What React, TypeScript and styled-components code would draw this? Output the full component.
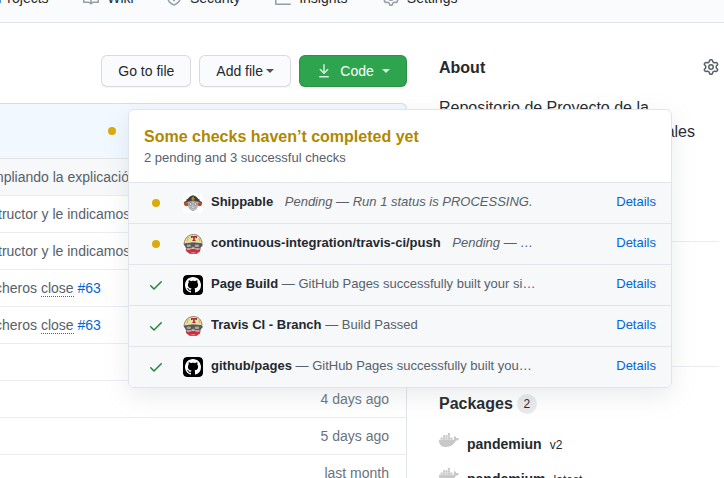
import React from "react";
import styled, { createGlobalStyle } from "styled-components";
import { FaDocker } from "react-icons/fa";

const GlobalStyle = createGlobalStyle`
  *, *::before, *::after { box-sizing: border-box; }
  body {
    margin: 0;
    background: #fff;
    color: #24292e;
    font-family: "Liberation Sans", Arial, sans-serif;
    font-size: 14px;
    line-height: 20px;
  }
  a { color: #0366d6; text-decoration: none; }
`;

const Page = styled.div`
  position: relative;
  height: 100vh;
  overflow: hidden;
`;

const Nav = styled.nav`
  display: flex;
  align-items: flex-end;
  gap: 30px;
  height: 23px;
  padding-bottom: 14px;
  margin-left: -26px;
  overflow: hidden;
  background: #fafbfc;
  border-bottom: 1px solid #e1e4e8;
`;

const NavLink = styled.a`
  display: flex;
  align-items: center;
  gap: 8px;
  color: #24292e;
`;

const NavLabel = styled.span`
  &::after {
    content: attr(data-label);
    display: block;
    height: 0;
    overflow: hidden;
    visibility: hidden;
    font-weight: 600;
  }
`;

const Icon = styled.svg<{ $color?: string }>`
  flex: none;
  display: block;
  width: 16px;
  height: 16px;
  fill: ${(p) => p.$color ?? "currentColor"};
`;

const Layout = styled.main`
  display: grid;
  grid-template-columns: minmax(0, 1fr) 280px;
  column-gap: 32px;
  padding: 32px 5px 0 0;
`;

const Toolbar = styled.div`
  display: flex;
  justify-content: flex-end;
  gap: 8px;
  margin-bottom: 16px;
`;

const Button = styled.button<{ $primary?: boolean; $gap?: number }>`
  display: flex;
  align-items: center;
  justify-content: center;
  gap: ${(p) => p.$gap ?? 8}px;
  min-width: ${(p) => (p.$primary ? "108px" : "auto")};
  height: 32px;
  padding: 0 16px;
  border: 1px solid rgba(27, 31, 35, 0.15);
  border-radius: 6px;
  background: ${(p) => (p.$primary ? "#2ea44f" : "#fafbfc")};
  color: ${(p) => (p.$primary ? "#fff" : "#24292e")};
  font: inherit;
  box-shadow: 0 1px 0 rgba(27, 31, 35, 0.04);
`;

const Caret = styled.span`
  border: 4px solid transparent;
  border-top-color: currentColor;
  border-bottom: 0;
  opacity: 0.8;
`;

const Files = styled.section`
  border: 1px solid #e1e4e8;
  border-left: 0;
  border-top: 0;
  border-top-right-radius: 6px;
`;

const LatestCommit = styled.div`
  display: flex;
  align-items: center;
  height: 56px;
  padding-left: 108px;
  margin-right: -1px;
  background: #f1f8ff;
  border: 1px solid #c8e1ff;
  border-left: 0;
  border-bottom-color: #e1e4e8;
  border-top-right-radius: 6px;
`;

const Dot = styled.span`
  width: 8px;
  height: 8px;
  border-radius: 50%;
  background: #dbab09;
`;

const FileTable = styled.table`
  width: 100%;
  table-layout: fixed;
  border-spacing: 0;
  color: #586069;
`;

const FileRow = styled.tr<{ $shaded?: boolean }>`
  background: ${(p) => (p.$shaded ? "#f6f8fa" : "#fff")};
`;

const Cell = styled.td`
  height: 37px;
  padding: 0;
  border-bottom: 1px solid #eaecef;
  white-space: nowrap;
`;

const AgeCell = styled(Cell)`
  width: 120px;
  padding-right: 17px;
  text-align: right;
  color: #6a737d;
`;

const Message = styled.div<{ $clip: number }>`
  margin-left: -${(p) => p.$clip}px;
`;

const Closes = styled.span`
  border-bottom: 1px dotted #586069;
`;

const SidebarSection = styled.section`
  padding-bottom: 24px;
  border-bottom: 1px solid #eaecef;
`;

const About = styled(SidebarSection)`
  height: 187px;
`;

const Releases = styled(SidebarSection)`
  height: 125px;
`;

const Packages = styled.section`
  padding-top: 24px;
`;

const HeadingRow = styled.div`
  display: flex;
  align-items: center;
  justify-content: space-between;
  height: 24px;
  margin-bottom: 17px;
`;

const Heading = styled.h2`
  display: flex;
  align-items: center;
  margin: 0;
  padding-top: 2px;
  font-size: 16px;
  line-height: 24px;
  gap: 4px;
`;

const IconButton = styled.button`
  padding: 0;
  border: 0;
  background: none;
  color: #586069;
`;

const Description = styled.p`
  margin: 0;
  font-size: 16px;
  line-height: 24px;
`;

const DescriptionEnd = styled.span`
  display: block;
  padding-right: 24px;
  text-align: right;
`;

const Counter = styled.span`
  min-width: 20px;
  padding: 0 6px;
  border-radius: 10px;
  background: rgba(209, 213, 218, 0.5);
  font-size: 12px;
  font-weight: 400;
  line-height: 20px;
  text-align: center;
`;

const PackageList = styled.ul`
  display: grid;
  gap: 10px;
  margin: 0;
  padding: 0;
  list-style: none;
`;

const PackageItem = styled.li`
  display: flex;
  align-items: baseline;
  gap: 8px;
  line-height: 24px;
`;

const DockerIcon = styled(FaDocker)`
  align-self: flex-start;
  width: 20px;
  height: 16px;
  color: #c8c8c8;
`;

const PackageLink = styled.a`
  color: #24292e;
  font-weight: 600;
`;

const Version = styled.span`
  font-size: 12px;
`;

const Popover = styled.div`
  position: absolute;
  top: 109px;
  left: 128px;
  width: 544px;
  overflow: hidden;
  background: #fff;
  border: 1px solid #e1e4e8;
  border-radius: 6px;
  box-shadow: 0 8px 24px rgba(149, 157, 165, 0.2);
  color: #586069;
  font-size: 13px;
`;

const PopoverHeader = styled.header`
  padding: 16px 15px 14px;
`;

const PopoverTitle = styled.h3`
  margin: 0;
  color: #b08800;
  font-size: 16px;
  line-height: 22px;
`;

const PopoverSubtitle = styled.p`
  margin: 0;
  line-height: 20px;
`;

const CheckList = styled.ul`
  margin: 0;
  padding: 0;
  list-style: none;
`;

const CheckItem = styled.li`
  display: flex;
  align-items: center;
  gap: 8px;
  height: 41px;
  padding: 0 15px;
  background: #f6f8fa;
  border-top: 1px solid #e1e4e8;
`;

const Status = styled.span`
  display: flex;
  justify-content: center;
  width: 24px;
  margin-right: 7px;
`;

const Avatar = styled.svg`
  flex: none;
  width: 20px;
  height: 20px;
  border-radius: 4px;
`;

const CheckText = styled.div`
  flex: 1;
  min-width: 0;
  padding-bottom: 2px;
  white-space: nowrap;
  overflow: hidden;
`;

const CheckName = styled.strong`
  color: #24292e;
`;

const PendingText = styled.em`
  margin-left: 8px;
`;

const DetailsLink = styled.a`
  padding-bottom: 2px;
`;

const paths = {
  gear:
    "M7.429 1.525a6.593 6.593 0 011.142 0c.036.003.108.036.137.146l.289 1.105c.147.56.55.967.997 1.189.174.086.341.183.501.29.417.278.97.423 1.53.27l1.102-.303c.11-.03.175.016.195.046.219.31.41.641.573.989.014.031.022.11-.059.19l-.815.806c-.411.406-.562.957-.53 1.456a4.588 4.588 0 010 .582c-.032.499.119 1.05.53 1.456l.815.806c.08.08.073.159.059.19a6.494 6.494 0 01-.573.99c-.02.029-.086.074-.195.045l-1.103-.303c-.559-.153-1.112-.008-1.529.27-.16.107-.327.204-.5.29-.449.222-.851.628-.998 1.189l-.289 1.105c-.029.11-.101.143-.137.146a6.613 6.613 0 01-1.142 0c-.036-.003-.108-.037-.137-.146l-.289-1.105c-.147-.56-.55-.967-.997-1.189a4.502 4.502 0 01-.501-.29c-.417-.278-.97-.423-1.53-.27l-1.102.303c-.11.03-.175-.016-.195-.046a6.492 6.492 0 01-.573-.989c-.014-.031-.022-.11.059-.19l.815-.806c.411-.406.562-.957.53-1.456a4.587 4.587 0 010-.582c.032-.499-.119-1.05-.53-1.456l-.815-.806c-.08-.08-.073-.159-.059-.19a6.44 6.44 0 01.573-.99c.02-.029.086-.075.195-.045l1.103.303c.559.153 1.112.008 1.529-.27.16-.107.327-.204.5-.29.449-.222.851-.628.998-1.189l.289-1.105c.029-.11.101-.143.137-.146zM8 0c-.236 0-.47.01-.701.03-.743.065-1.29.615-1.458 1.261l-.29 1.106c-.017.066-.078.158-.211.224a5.994 5.994 0 00-.668.386c-.123.082-.233.09-.3.071L3.27 2.776c-.644-.177-1.392.02-1.82.63a7.977 7.977 0 00-.704 1.217c-.315.675-.111 1.422.363 1.891l.815.806c.05.048.098.147.088.294a6.084 6.084 0 000 .772c.01.147-.038.246-.088.294l-.815.806c-.474.469-.678 1.216-.363 1.891.2.428.436.835.704 1.218.428.609 1.176.806 1.82.63l1.103-.303c.066-.019.176-.011.299.071.213.143.436.272.668.386.133.066.194.158.212.224l.289 1.106c.169.646.715 1.196 1.458 1.26a8.094 8.094 0 001.402 0c.743-.064 1.29-.614 1.458-1.26l.29-1.106c.017-.066.078-.158.211-.224a5.98 5.98 0 00.668-.386c.123-.082.233-.09.3-.071l1.102.302c.644.177 1.392-.02 1.82-.63.268-.382.505-.789.704-1.217.315-.675.111-1.422-.364-1.891l-.814-.806c-.05-.048-.098-.147-.088-.294a6.1 6.1 0 000-.772c-.01-.147.039-.246.088-.294l.814-.806c.475-.469.679-1.216.364-1.891a7.992 7.992 0 00-.704-1.218c-.428-.609-1.176-.806-1.82-.63l-1.103.303c-.066.019-.176.011-.299-.071a5.991 5.991 0 00-.668-.386c-.133-.066-.194-.158-.212-.224L10.16 1.29C9.99.645 9.444.095 8.701.031A8.094 8.094 0 008 0zm1.5 8a1.5 1.5 0 11-3 0 1.5 1.5 0 013 0zM11 8a3 3 0 11-6 0 3 3 0 016 0z",
  project:
    "M1.75 0A1.75 1.75 0 000 1.75v12.5C0 15.216.784 16 1.75 16h12.5A1.75 1.75 0 0016 14.25V1.75A1.75 1.75 0 0014.25 0H1.75zM1.5 1.75a.25.25 0 01.25-.25h12.5a.25.25 0 01.25.25v12.5a.25.25 0 01-.25.25H1.75a.25.25 0 01-.25-.25V1.75zM11.75 3a.75.75 0 00-.75.75v7.5a.75.75 0 001.5 0v-7.5a.75.75 0 00-.75-.75zm-8.25.75a.75.75 0 011.5 0v5.5a.75.75 0 01-1.5 0v-5.5zM8 3a.75.75 0 00-.75.75v3.5a.75.75 0 001.5 0v-3.5A.75.75 0 008 3z",
  book:
    "M0 1.75A.75.75 0 01.75 1h4.253c1.227 0 2.317.59 3 1.501A3.744 3.744 0 0111.006 1h4.245a.75.75 0 01.75.75v10.5a.75.75 0 01-.75.75h-4.507a2.25 2.25 0 00-1.591.659l-.622.621a.75.75 0 01-1.06 0l-.622-.621A2.25 2.25 0 005.258 13H.75a.75.75 0 01-.75-.75V1.75zm8.755 3a2.25 2.25 0 012.25-2.25H14.5v9h-3.757c-.71 0-1.4.201-1.992.572l.004-7.322zm-1.504 7.324l.004-5.073-.002-2.253A2.25 2.25 0 005.003 2.5H1.5v9h3.757a3.75 3.75 0 011.994.574z",
  shield:
    "M7.467.133a1.75 1.75 0 011.066 0l5.25 1.68A1.75 1.75 0 0115 3.48V7c0 1.566-.32 3.182-1.303 4.682-.983 1.498-2.585 2.813-5.032 3.855a1.7 1.7 0 01-1.33 0c-2.447-1.042-4.049-2.357-5.032-3.855C1.32 10.182 1 8.566 1 7V3.48a1.75 1.75 0 011.217-1.667l5.25-1.68zm.61 1.429a.25.25 0 00-.153 0l-5.25 1.68a.25.25 0 00-.174.238V7c0 1.358.275 2.666 1.057 3.86.784 1.194 2.121 2.34 4.366 3.297a.2.2 0 00.154 0c2.245-.956 3.582-2.104 4.366-3.298C13.225 9.666 13.5 8.36 13.5 7V3.48a.25.25 0 00-.174-.237l-5.25-1.68zM9 10.5a1 1 0 11-2 0 1 1 0 012 0z",
  graph:
    "M1.5 1.75a.75.75 0 00-1.5 0v12.5c0 .414.336.75.75.75h14.5a.75.75 0 000-1.5H1.5V1.75zm14.28 2.53a.75.75 0 00-1.06-1.06L10 7.94 7.53 5.47a.75.75 0 00-1.06 0L3.22 8.72a.75.75 0 001.06 1.06L7 7.06l2.47 2.47a.75.75 0 001.06 0l5.25-5.25z",
  download:
    "M7.47 10.78a.75.75 0 001.06 0l3.75-3.75a.75.75 0 00-1.06-1.06L8.75 8.44V1.75a.75.75 0 00-1.5 0v6.69L4.78 5.97a.75.75 0 00-1.06 1.06l3.75 3.75zM3.75 13a.75.75 0 000 1.5h8.5a.75.75 0 000-1.5h-8.5z",
  check:
    "M13.78 4.22a.75.75 0 010 1.06l-7.25 7.25a.75.75 0 01-1.06 0L2.22 9.28a.75.75 0 011.06-1.06L6 10.94l6.72-6.72a.75.75 0 011.06 0z",
  github:
    "M8 0C3.58 0 0 3.58 0 8c0 3.54 2.29 6.53 5.47 7.59.4.07.55-.17.55-.38 0-.19-.01-.82-.01-1.49-2.01.37-2.53-.49-2.69-.94-.09-.23-.48-.94-.82-1.13-.28-.15-.68-.52-.01-.53.63-.01 1.08.58 1.23.82.72 1.21 1.87.87 2.33.66.07-.52.28-.87.51-1.07-1.78-.2-3.64-.89-3.64-3.95 0-.87.31-1.59.82-2.15-.08-.2-.36-1.02.08-2.12 0 0 .67-.21 2.2.82.64-.18 1.32-.27 2-.27.68 0 1.36.09 2 .27 1.53-1.04 2.2-.82 2.2-.82.44 1.1.16 1.92.08 2.12.51.56.82 1.27.82 2.15 0 3.07-1.87 3.75-3.65 3.95.29.25.54.73.54 1.48 0 1.07-.01 1.93-.01 2.2 0 .21.15.46.55.38A8.013 8.013 0 0016 8c0-4.42-3.58-8-8-8z",
};

type IconName = keyof typeof paths;

const Octicon = ({ name, color }: { name: IconName; color?: string }) => (
  <Icon viewBox="0 0 16 16" $color={color} aria-hidden="true">
    <path fillRule="evenodd" d={paths[name]} />
  </Icon>
);

const ShippableAvatar = () => (
  <Avatar viewBox="0 0 20 20" aria-hidden="true">
    <rect width="20" height="20" fill="#fff" />
    <path d="M.8 9L5 9.500v3.500H2L1 11.500zM19.200 9L15 9.500v3.500h3l1-1.500z" fill="#c8481c" />
    <path d="M1 9l3-1.500 2 1-4 1.300zM19 9l-3-1.500-2 1 4 1.300z" fill="#4d3930" />
    <path d="M5 8.500h10v4.500l-2 3-3 2-3-2-2-3z" fill="#c3c5c7" stroke="#77797b" strokeWidth=".5" />
    <path d="M3 6.800C5.500 6 6 3 10 2.200c4 .8 4.500 3.800 7 4.600L15.500 9 10 7.800 4.500 9z" fill="#3f3b34" />
    <path d="M8 6l2-2.800L12 6l-2 1.300z" fill="#a98f2d" />
    <path d="M4.500 8.800Q10 6.800 15.500 8.800" fill="none" stroke="#b78a3a" strokeWidth=".7" />
    <circle cx="7.600" cy="11" r="1.500" fill="#ddd" stroke="#555" strokeWidth=".6" />
    <circle cx="12.400" cy="11" r="1.500" fill="#ddd" stroke="#555" strokeWidth=".6" />
    <path d="M7.500 14.500q2.500-1.500 5 0-2.500 2.500-5 0z" fill="#eee" stroke="#777" strokeWidth=".5" />
  </Avatar>
);

const TravisAvatar = () => (
  <Avatar viewBox="0 0 20 20" aria-hidden="true">
    <circle cx="10" cy="10" r="10" fill="#fff" />
    <path d="M3 9h14.500l-.5 7-3 3.500H6.500L3.500 16z" fill="#b9a39a" stroke="#5d4b48" strokeWidth=".7" />
    <path d="M1 9.500C2 3.500 5.500.6 10.500.5s8 3.500 8.500 8l-.5 1.200Q10 7.500 1 10z" fill="#ebe09c" stroke="#675d48" strokeWidth=".7" />
    <path d="M8 2h6v2h-1.200v-.6h-1V6h.8v1H9.400V6h.8V3.400h-1V4H8z" fill="#a52b3c" />
    <path d="M5.500 3L4 7.500M16 4l1 3.500" stroke="#b5a66b" strokeWidth=".8" />
    <path d="M.5 10Q10 7.800 19.500 9.500v2.300L17 14h-4.500L10 12.500l-2 1.500H3z" fill="#59575a" />
    <rect x="3.700" y="10.500" width="4.200" height="2.500" rx="1" fill="#a2a5a3" />
    <rect x="11.700" y="10.500" width="4.500" height="2.500" rx="1" fill="#a2a5a3" />
    <path d="M9 14h2l.8 2H8.500z" fill="#e2bfb0" />
    <path d="M2.500 15.500l3 .7L9 15h2.500l3 1.200 3-.7-1 2.500-3 1-3-1-4 1-2.500-1z" fill="#d7263e" />
  </Avatar>
);

const GithubAvatar = () => (
  <Avatar viewBox="0 0 20 20" aria-hidden="true">
    <rect width="20" height="20" rx="4" fill="#000" />
    <path transform="translate(2 2)" fill="#fff" d={paths.github} />
  </Avatar>
);

const navItems: { label: string; icon: IconName }[] = [
  { label: "Projects", icon: "project" },
  { label: "Wiki", icon: "book" },
  { label: "Security", icon: "shield" },
  { label: "Insights", icon: "graph" },
  { label: "Settings", icon: "gear" },
];

type FileEntry = { message?: string; clip?: number; issue?: string; age?: string; shaded?: boolean };

const files: FileEntry[] = [
  { message: "mpliando la explicació", clip: 8, shaded: true },
  { message: "tructor y le indicamos", clip: 2 },
  { message: "tructor y le indicamos", clip: 2 },
  { message: "cheros", clip: 5, issue: "#63" },
  { message: "cheros", clip: 5, issue: "#63" },
  {},
  { age: "4 days ago" },
  { age: "5 days ago" },
  { age: "last month" },
];

const checks = [
  { name: "Shippable", text: "Pending — Run 1 status is PROCESSING.", pending: true, Picture: ShippableAvatar },
  { name: "continuous-integration/travis-ci/push", text: "Pending — …", pending: true, Picture: TravisAvatar },
  { name: "Page Build", text: "— GitHub Pages successfully built your si…", pending: false, Picture: GithubAvatar },
  { name: "Travis CI - Branch", text: "— Build Passed", pending: false, Picture: TravisAvatar },
  { name: "github/pages", text: "— GitHub Pages successfully built you…", pending: false, Picture: GithubAvatar },
];

const packages = [
  { name: "pandemiun", version: "v2" },
  { name: "pandemium", version: "latest" },
];

export default function App() {
  return (
    <Page>
      <GlobalStyle />
      <Nav>
        {navItems.map((item) => (
          <NavLink href="#" key={item.label}>
            <Octicon name={item.icon} color="#959da5" />
            <NavLabel data-label={item.label}>{item.label}</NavLabel>
          </NavLink>
        ))}
      </Nav>
      <Layout>
        <div>
          <Toolbar>
            <Button>Go to file</Button>
            <Button $gap={3}>
              Add file
              <Caret />
            </Button>
            <Button $primary>
              <Octicon name="download" color="rgba(255,255,255,.8)" />
              Code
              <Caret />
            </Button>
          </Toolbar>
          <Files>
            <LatestCommit>
              <Dot />
            </LatestCommit>
            <FileTable>
              <tbody>
                {files.map((file, i) => (
                  <FileRow key={i} $shaded={file.shaded}>
                    <Cell>
                      {file.message && (
                        <Message $clip={file.clip ?? 0}>
                          {file.message}
                          {file.issue && (
                            <>
                              {" "}
                              <Closes>close</Closes> <a href="#">{file.issue}</a>
                            </>
                          )}
                        </Message>
                      )}
                    </Cell>
                    <AgeCell>{file.age}</AgeCell>
                  </FileRow>
                ))}
              </tbody>
            </FileTable>
          </Files>
        </div>
        <aside>
          <About>
            <HeadingRow>
              <Heading>About</Heading>
              <IconButton aria-label="Edit repository details">
                <Octicon name="gear" />
              </IconButton>
            </HeadingRow>
            <Description>
              Repositorio de Proyecto de la
              <DescriptionEnd>ales</DescriptionEnd>
            </Description>
          </About>
          <Releases />
          <Packages>
            <HeadingRow>
              <Heading>
                Packages <Counter>2</Counter>
              </Heading>
            </HeadingRow>
            <PackageList>
              {packages.map((item) => (
                <PackageItem key={item.name}>
                  <DockerIcon aria-hidden="true" />
                  <PackageLink href="#">{item.name}</PackageLink>
                  <Version>{item.version}</Version>
                </PackageItem>
              ))}
            </PackageList>
          </Packages>
        </aside>
      </Layout>
      <Popover role="dialog" aria-label="Commit checks">
        <PopoverHeader>
          <PopoverTitle>Some checks haven’t completed yet</PopoverTitle>
          <PopoverSubtitle>2 pending and 3 successful checks</PopoverSubtitle>
        </PopoverHeader>
        <CheckList>
          {checks.map(({ name, text, pending, Picture }) => (
            <CheckItem key={name}>
              <Status>{pending ? <Dot /> : <Octicon name="check" color="#22863a" />}</Status>
              <Picture />
              <CheckText>
                <CheckName>{name}</CheckName> {pending ? <PendingText>{text}</PendingText> : text}
              </CheckText>
              <DetailsLink href="#">Details</DetailsLink>
            </CheckItem>
          ))}
        </CheckList>
      </Popover>
    </Page>
  );
}
